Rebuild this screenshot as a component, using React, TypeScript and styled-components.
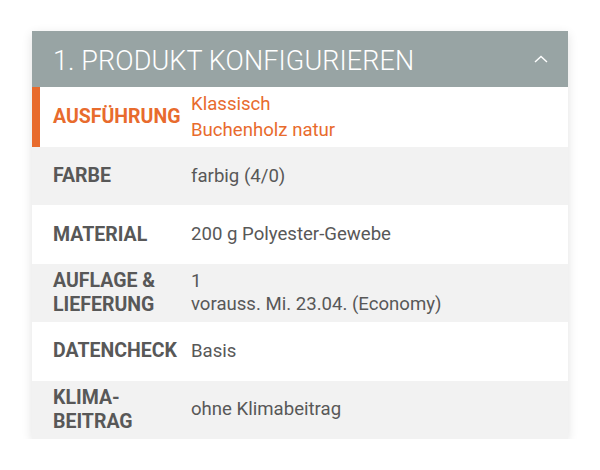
import styled, { createGlobalStyle } from 'styled-components';

const GlobalStyle = createGlobalStyle`
  html, body { margin: 0; padding: 0; background: #ffffff; }
  body { font-family: Roboto, "DejaVu Sans", sans-serif; }
`;

type Spec = { label: string[]; value: string[]; active?: boolean };

const SPECS: Spec[] = [
  { label: ['AUSFÜHRUNG'], value: ['Klassisch', 'Buchenholz natur'], active: true },
  { label: ['FARBE'], value: ['farbig (4/0)'] },
  { label: ['MATERIAL'], value: ['200 g Polyester-Gewebe'] },
  { label: ['AUFLAGE &', 'LIEFERUNG'], value: ['1', 'vorauss. Mi. 23.04. (Economy)'] },
  { label: ['DATENCHECK'], value: ['Basis'] },
  { label: ['KLIMA-', 'BEITRAG'], value: ['ohne Klimabeitrag'] },
];

export default function App() {
  return (
    <>
      <GlobalStyle />
      <Page>
        <Panel>
          <Header>
            <HeaderTitle>1. PRODUKT KONFIGURIEREN</HeaderTitle>
            <svg width="14" height="8" viewBox="0 0 14 8" fill="none">
              <path d="M1 7 L7 1.5 L13 7" stroke="#ffffff" strokeWidth="1.4" />
            </svg>
          </Header>
          {SPECS.map((s, i) => (
            <Row key={s.label.join(' ')} $striped={i % 2 === 1} $active={!!s.active}>
              <Label $active={!!s.active}>
                {s.label.map((l) => (
                  <div key={l}>{l}</div>
                ))}
              </Label>
              <Value $active={!!s.active}>
                {s.value.map((v) => (
                  <div key={v}>{v}</div>
                ))}
              </Value>
            </Row>
          ))}
        </Panel>
      </Page>
    </>
  );
}

const ORANGE = '#e86b2d';
const TEXT = '#585858';

const Page = styled.div`
  padding: 31px 32px 0 32px;
`;

const Panel = styled.div`
  width: 536px;
  background: #ffffff;
  box-shadow: 0 3px 10px rgba(0, 0, 0, 0.12);
`;

const Header = styled.div`
  height: 56px;
  background: #98a4a4;
  display: flex;
  align-items: center;
  justify-content: space-between;
  padding: 0 20px 0 21px;
  box-sizing: border-box;
`;

const HeaderTitle = styled.div`
  color: #ffffff;
  font-size: 27px;
  font-weight: 300;
  letter-spacing: 0.1px;
  padding-top: 3px;
`;

const Row = styled.div<{ $striped: boolean; $active: boolean }>`
  display: flex;
  align-items: center;
  min-height: 58.4px;
  padding: 4px 0 4px 21px;
  box-sizing: border-box;
  background: ${({ $striped }) => ($striped ? '#f2f2f2' : '#ffffff')};
  box-shadow: ${({ $active }) => ($active ? `inset 8px 0 0 ${ORANGE}` : 'none')};
`;

const Label = styled.div<{ $active: boolean }>`
  width: 138px;
  flex-shrink: 0;
  font-size: 19.5px;
  font-weight: 700;
  line-height: 24px;
  color: ${({ $active }) => ($active ? ORANGE : TEXT)};
`;

const Value = styled.div<{ $active: boolean }>`
  font-size: 18.6px;
  font-weight: 400;
  line-height: ${({ $active }) => ($active ? '26px' : '23px')};
  color: ${({ $active }) => ($active ? ORANGE : TEXT)};
`;
